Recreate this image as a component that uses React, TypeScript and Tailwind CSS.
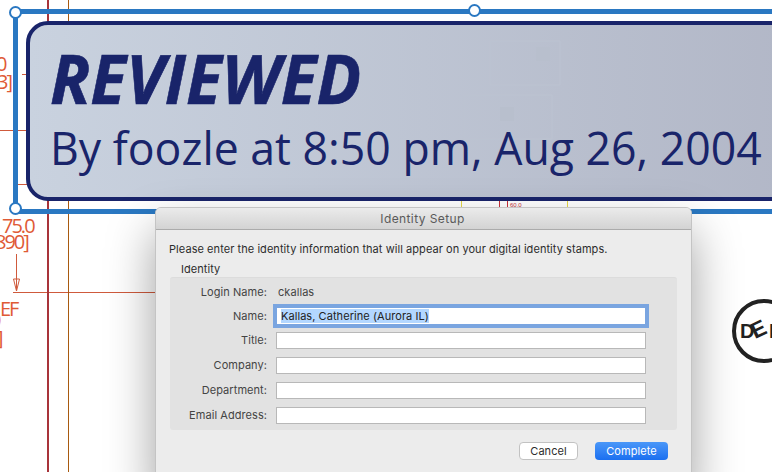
const fields = ['Title:', 'Company:', 'Department:', 'Email Address:'];

// the cad sheet behind the stamp and the dialog
function Drawing() {
  const red = '#df5a36';
  const font = 'Open Sans';
  return (
    <svg width="772" height="472" viewBox="0 0 772 472" className="absolute inset-0">
      <g fill="none" strokeWidth="1">
        <path d="M0 130.5H26M22 74.5H28M18 184.5H28M13 292.5H156" stroke="#cf5a3c" />
        <path d="M48 0V472" stroke="#a8343a" strokeWidth="2" />
        <path d="M68.5 0V472" stroke="#a85a10" />
        <path d="M461.5 200V208M567.5 200V208" stroke="#e6d84a" />
        <path d="M499.5 200V208M507.5 200V208" stroke="#c8303a" />
        <path d="M16.5 254V291M13.5 279H19.5L16.5 291Z" stroke="#cf5a3c" />
      </g>
      <g fontFamily={font} fontSize="20" fill={red} letterSpacing="-2">
        <text x="-4" y="71">0</text>
        <text x="-3" y="89">3]</text>
        <text x="2" y="233">75.0</text>
        <text x="-5" y="249">890]</text>
        <text x="0" y="316">EF</text>
        <text x="-10" y="327">0</text>
        <text x="-3" y="345">]</text>
      </g>
      <text x="510" y="207" fontFamily="Liberation Sans" fontSize="6" fill="#c8303a">60.0</text>
      <g transform="translate(730 297)">
        <circle cx="34" cy="34" r="30" fill="none" stroke="#222" strokeWidth="4" />
        <text x="10" y="41" fontFamily="Liberation Sans" fontWeight="700" fontSize="20" fill="#222">D</text>
        <text transform="translate(25 42) rotate(-25)" fontFamily="Liberation Sans" fontWeight="700" fontSize="22" fill="#222">E</text>
        <text x="39" y="41" fontFamily="Liberation Sans" fontWeight="700" fontSize="20" fill="#222">L</text>
      </g>
    </svg>
  );
}

function Selection() {
  const handle = 'absolute h-[13px] w-[13px] rounded-full border-2 border-[#2a78c2] bg-white';
  return (
    <div className="absolute left-[13px] top-[9px] h-[205px] w-[800px] border-[5px] border-[#2a78c2]">
      <span className={`${handle} left-[-9px] top-[-8px]`} />
      <span className={`${handle} left-[450px] top-[-10px]`} />
      <span className={`${handle} left-[-9px] top-[188px]`} />
    </div>
  );
}

function Stamp() {
  return (
    <div className="absolute left-[26px] top-[21px] h-[180px] w-[800px] overflow-hidden rounded-[22px] border-4 border-[#19246a] bg-gradient-to-r from-[#c9d2df] to-[#b1b6c6] text-[#19246a]">
      <svg width="130" height="110" viewBox="0 0 130 110" className="absolute left-[430px] top-[10px]">
        <path d="M30 6H100V50H30ZM4 60H92V104H4Z" fill="none" stroke="#bcc3d1" />
        <rect x="76" y="12" width="14" height="14" fill="#b8bfcd" />
        <rect x="40" y="72" width="14" height="14" fill="#b8bfcd" />
      </svg>
      <div className="ml-[20px] mt-[10px] origin-left scale-x-[0.97] whitespace-nowrap font-['Open_Sans',sans-serif] text-[68px] font-bold italic leading-[86px] [-webkit-text-stroke:0.6px_#19246a]">
        REVIEWED
      </div>
      <div className="ml-[20px] mt-[-4px] origin-left scale-x-[0.97] whitespace-nowrap font-['Open_Sans',sans-serif] text-[46px] leading-[60px]">
        By foozle at 8:50 pm, Aug 26, 2004
      </div>
    </div>
  );
}

function Dialog() {
  return (
    <div className="absolute left-[155px] top-[207px] h-[280px] w-[537px] overflow-hidden rounded-[6px] border border-[#c4c4c4] bg-[#ececec] font-['Inter',sans-serif] text-[11px] tracking-[0.06px] text-[#2c2c2c] shadow-[0_24px_48px_rgba(0,0,0,0.38)]">
      <div className="flex h-[22px] items-center justify-center border-b border-[#ababab] bg-gradient-to-b from-[#ebebeb] to-[#d3d3d3] pr-[2px] text-[12px] tracking-[0.4px] text-[#5a5a5a]">
        Identity Setup
      </div>
      <div className="flex flex-col pl-[13px] pr-[14px]">
        <p className="mt-[12px] leading-[15px]">Please enter the identity information that will appear on your digital identity stamps.</p>
        <div className="ml-[12px] mt-[5px] leading-[14px]">Identity</div>
        <div className="ml-px mt-px flex h-[153px] flex-col rounded-[3px] border-t border-[#dcdcdc] bg-[#e2e2e2] pr-[31px]">
          <div className="mt-[6px] flex h-[16px] items-center gap-[11px]">
            <span className="w-[97px] text-right text-[#444]">Login Name:</span>
            <span className="text-[#444]">ckallas</span>
          </div>
          <div className="mt-[7px] flex items-center gap-[9px]">
            <span className="w-[97px] text-right text-[#444]">Name:</span>
            <div className="h-[18px] flex-1 border border-[#7aa5e0] bg-white pl-[4px] leading-[16px] text-[#222] outline-[3px] outline-[#7aa5e0]">
              <span className="bg-[#b3d7ff]">Kallas, Catherine (Aurora IL)</span>
            </div>
          </div>
          <div className="mt-[7px] flex flex-col gap-[8px]">
            {fields.map(label => (
              <div key={label} className="flex items-center gap-[9px]">
                <span className="w-[97px] text-right text-[#444]">{label}</span>
                <div className="h-[17px] flex-1 border border-[#b8b8b8] bg-white" />
              </div>
            ))}
          </div>
        </div>
        <div className="mt-[12px] flex justify-end gap-[17px] pr-[9px]">
          <button className="h-[18px] w-[59px] rounded-[4px] border border-[#c2c2c2] bg-white text-[11px] leading-[16px] text-[#2c2c2c]">Cancel</button>
          <button className="h-[18px] w-[73px] rounded-[4px] bg-gradient-to-b from-[#4a97f8] to-[#1a6ff0] text-[11px] leading-[18px] text-white">Complete</button>
        </div>
      </div>
    </div>
  );
}

export default function App() {
  return (
    <div className="relative h-[472px] w-[772px] overflow-hidden bg-white">
      <Drawing />
      <Selection />
      <Stamp />
      <Dialog />
    </div>
  );
}
